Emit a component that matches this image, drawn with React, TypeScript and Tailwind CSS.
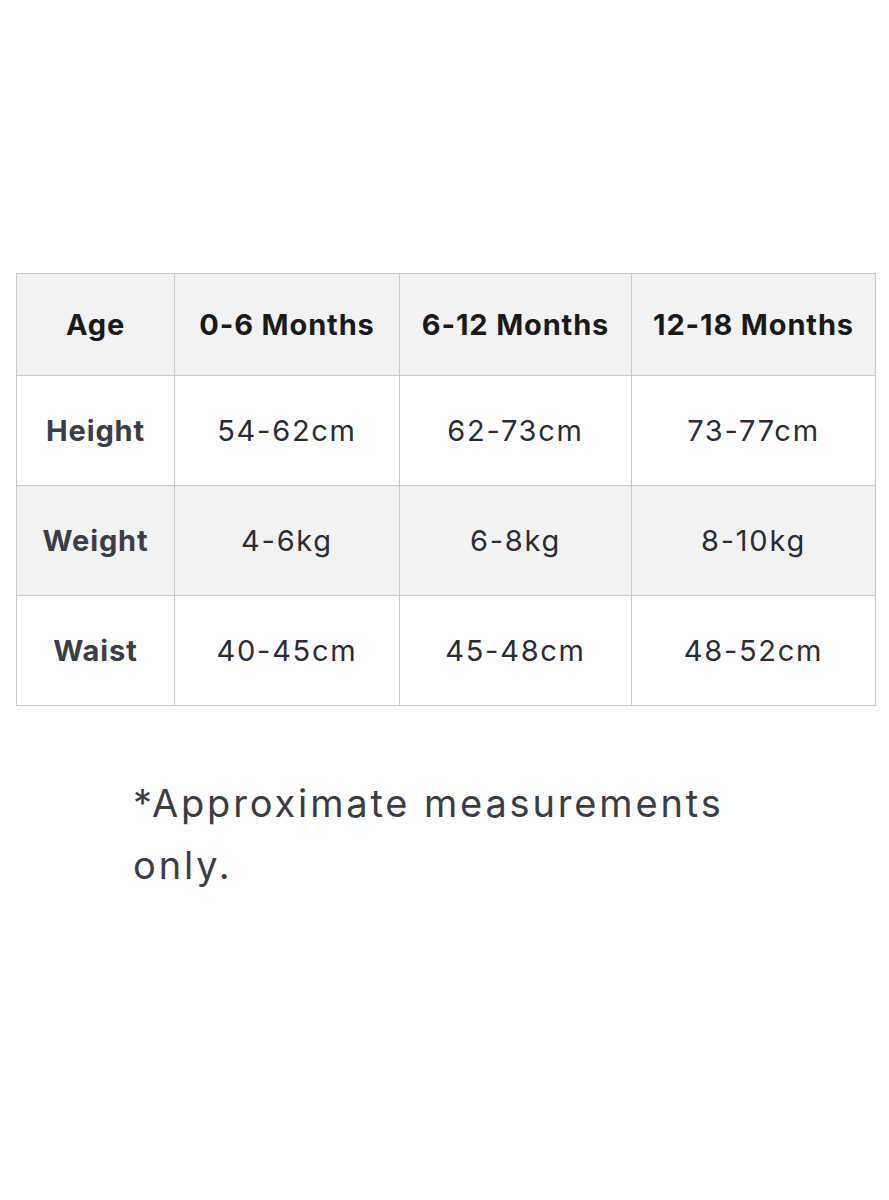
const cols = ["0-6 Months", "6-12 Months", "12-18 Months"];

const rows = [
  { label: "Height", values: ["54-62cm", "62-73cm", "73-77cm"], shaded: false },
  { label: "Weight", values: ["4-6kg", "6-8kg", "8-10kg"], shaded: true },
  { label: "Waist", values: ["40-45cm", "45-48cm", "48-52cm"], shaded: false },
];

export default function App() {
  return (
    <div
      className="min-h-[1200px] w-full bg-white pt-[273px]"
      style={{ fontFamily: "Inter, 'Noto Sans', sans-serif" }}
    >
      <div className="ml-[16px]">
        <table className="w-[860px] border-collapse border border-[#c9c9c9]">
          <thead>
            <tr className="h-[102px] bg-[#f2f2f2]">
              <th className="w-[158px] border border-[#c9c9c9] text-[29px] font-bold tracking-[0.03em] text-[#1a1a1a]">
                Age
              </th>
              {cols.map((c, i) => (
                <th
                  key={c}
                  className={`border border-[#c9c9c9] text-[29px] font-bold tracking-[0.03em] text-[#1a1a1a] ${
                    i === 0 ? "w-[225px]" : i === 1 ? "w-[232px]" : ""
                  }`}
                >
                  {c}
                </th>
              ))}
            </tr>
          </thead>
          <tbody>
            {rows.map((r) => (
              <tr
                key={r.label}
                className={`h-[110px] ${r.shaded ? "bg-[#f2f2f2]" : "bg-white"}`}
              >
                <td className="border border-[#c9c9c9] text-center text-[29px] font-bold tracking-[0.03em] text-[#3b3e46]">
                  {r.label}
                </td>
                {r.values.map((v) => (
                  <td
                    key={v}
                    className="border border-[#c9c9c9] text-center text-[29px] tracking-[0.06em] text-[#2a2d36]"
                  >
                    {v}
                  </td>
                ))}
              </tr>
            ))}
          </tbody>
        </table>
      </div>
      <p className="ml-[133px] mt-[66px] w-[620px] text-[38px] leading-[62px] tracking-[0.075em] text-[#3a3d45]">
        *Approximate measurements only.
      </p>
    </div>
  );
}
